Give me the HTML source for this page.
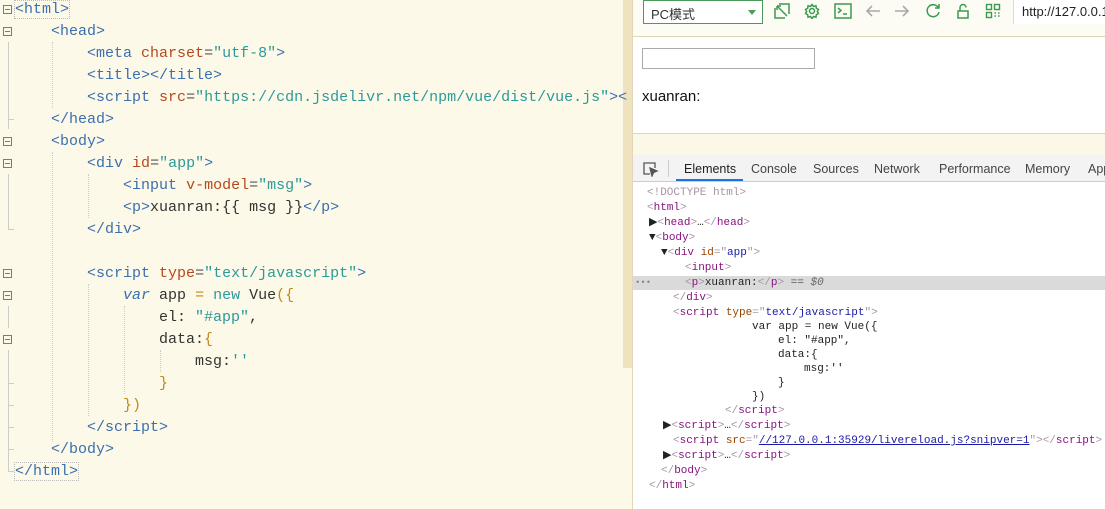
<!DOCTYPE html>
<html><head><meta charset="utf-8"><style>
*{margin:0;padding:0;box-sizing:border-box}
body{width:1105px;height:509px;overflow:hidden;background:#fff;position:relative;font-family:"Liberation Sans","Noto Sans CJK SC",sans-serif}
#ed{position:absolute;left:0;top:0;width:632px;height:509px;background:#fdf9e8}
#sb{position:absolute;left:623px;top:0;width:9px;height:368px;background:#efe2bf}
.ln{position:absolute;left:15px;font:15px/22px "Liberation Mono",monospace;white-space:pre;color:#333}
.t{color:#3a6fb0}.a{color:#b5481d}.v{color:#2b9a9a}.g{color:#555}.o{color:#c08a1a}.k{color:#3a6fb0;font-style:italic}.n{color:#2b9a9a}
.fold{position:absolute;left:3px;width:9px;height:9px;border:1px solid #4a9a5a}
.fold:after{content:"";position:absolute;left:1px;top:3px;width:5px;height:1px;background:#4a9a5a}
.vl{position:absolute;left:8px;width:1px;background:#ccc}
.hk{position:absolute;left:8px;width:6px;height:1px;background:#ccc}
.dg{position:absolute;width:0;border-left:1px dotted #ccc}
#rp{position:absolute;left:632px;top:0;width:473px;height:509px;border-left:1px solid #e0d6b8}
#tb{position:absolute;left:0;top:0;width:473px;height:37px;background:#fdfcf4;border-bottom:1px solid #e0d6b0}
#sel{position:absolute;left:10px;top:0;width:120px;height:24px;border:1px solid #4a9a5a;font-size:13px;padding:3px 7px;color:#333;background:#fff}
#sel:after{content:"";position:absolute;right:6px;top:9px;border:4px solid transparent;border-top:5px solid #4a9a5a}
svg.ic{position:absolute;top:3px;width:16px;height:16px}
#url{position:absolute;left:380px;top:0;width:100px;height:24px;background:#fff;border-left:1px solid #ddd;font-size:13px;padding:4px 8px;color:#222}
#pg{position:absolute;left:0;top:38px;width:473px;height:95px;background:#fff}
#inp{position:absolute;left:9px;top:10px;width:173px;height:21px;border:1px solid #aaa}
#xt{position:absolute;left:9px;top:50px;font-size:15px;color:#111}
#strip{position:absolute;left:0;top:133px;width:473px;height:22px;background:#fcf8e8;border-top:1px solid #e0d6b0}
#tabs{position:absolute;left:0;top:155px;width:473px;height:27px;background:#f3f3f3;border-bottom:1px solid #ccc;font-size:12.5px;color:#444}
#tabs span{position:absolute;top:7px}
#dt{position:absolute;left:0;top:183px;width:473px;height:326px;background:#fff;font:11px/15px "Liberation Mono",monospace;color:#222}
.d{position:absolute;white-space:pre}
.p{color:#881280}.b{color:#a894a6}.an{color:#994500}.av{color:#1a1aa6}
</style></head><body>
<div id="ed">
<div id="sb"></div>
<div class="fold" style="top:5px"></div><div class="fold" style="top:27px"></div><div class="fold" style="top:137px"></div><div class="fold" style="top:159px"></div><div class="fold" style="top:269px"></div><div class="fold" style="top:291px"></div><div class="fold" style="top:335px"></div>
<div class="vl" style="top:42px;height:87px"></div><div class="hk" style="top:119px"></div>
<div class="vl" style="top:174px;height:56px"></div><div class="hk" style="top:229px"></div>
<div class="vl" style="top:306px;height:22px"></div>
<div class="vl" style="top:350px;height:122px"></div><div class="hk" style="top:383px"></div><div class="hk" style="top:405px"></div><div class="hk" style="top:427px"></div><div class="hk" style="top:449px"></div><div class="hk" style="top:471px"></div>
<div class="dg" style="left:52px;top:42px;height:66px"></div>
<div class="dg" style="left:52px;top:152px;height:290px"></div>
<div class="dg" style="left:88px;top:174px;height:44px"></div>
<div class="dg" style="left:88px;top:284px;height:132px"></div>
<div class="dg" style="left:124px;top:306px;height:88px"></div>
<div class="dg" style="left:160px;top:350px;height:22px"></div>
<div class="ln" style="top:-1px"><span class="t" style="outline:1px dotted #bbb">&lt;html&gt;</span></div>
<div class="ln" style="top:21px">    <span class="t">&lt;head&gt;</span></div>
<div class="ln" style="top:43px">        <span class="t">&lt;meta</span> <span class="a">charset</span><span class="g">=</span><span class="v">"utf-8"</span><span class="t">&gt;</span></div>
<div class="ln" style="top:65px">        <span class="t">&lt;title&gt;&lt;/title&gt;</span></div>
<div class="ln" style="top:87px">        <span class="t">&lt;script</span> <span class="a">src</span><span class="g">=</span><span class="v">"https://cdn.jsdelivr.net/npm/vue/dist/vue.js"</span><span class="t">&gt;&lt;</span></div>
<div class="ln" style="top:109px">    <span class="t">&lt;/head&gt;</span></div>
<div class="ln" style="top:131px">    <span class="t">&lt;body&gt;</span></div>
<div class="ln" style="top:153px">        <span class="t">&lt;div</span> <span class="a">id</span><span class="g">=</span><span class="v">"app"</span><span class="t">&gt;</span></div>
<div class="ln" style="top:175px">            <span class="t">&lt;input</span> <span class="a">v-model</span><span class="g">=</span><span class="v">"msg"</span><span class="t">&gt;</span></div>
<div class="ln" style="top:197px">            <span class="t">&lt;p&gt;</span>xuanran:{{ msg }}<span class="t">&lt;/p&gt;</span></div>
<div class="ln" style="top:219px">        <span class="t">&lt;/div&gt;</span></div>
<div class="ln" style="top:263px">        <span class="t">&lt;script</span> <span class="a">type</span><span class="g">=</span><span class="v">"text/javascript"</span><span class="t">&gt;</span></div>
<div class="ln" style="top:285px">            <span class="k">var</span> app <span class="o">=</span> <span class="n">new</span> Vue<span class="o">({</span></div>
<div class="ln" style="top:307px">                el: <span class="v">"#app"</span>,</div>
<div class="ln" style="top:329px">                data:<span class="o">{</span></div>
<div class="ln" style="top:351px">                    msg:<span class="v">''</span></div>
<div class="ln" style="top:373px">                <span class="o">}</span></div>
<div class="ln" style="top:395px">            <span class="o">})</span></div>
<div class="ln" style="top:417px">        <span class="t">&lt;/script&gt;</span></div>
<div class="ln" style="top:439px">    <span class="t">&lt;/body&gt;</span></div>
<div class="ln" style="top:461px"><span class="t" style="outline:1px dotted #bbb">&lt;/html&gt;</span></div>
</div>
<div id="rp">
<div id="tb">
<div id="sel">PC模式</div>
<svg class="ic" style="left:141px" viewBox="0 0 16 16" fill="none" stroke="#3a9a50" stroke-width="1.5"><path d="M1 5V15H11M5 1H15V11M3 3L13 13M3 3H7M3 3V7"/></svg>
<svg class="ic" style="left:171px" viewBox="0 0 16 16" fill="none" stroke="#3a9a50" stroke-width="1.5"><circle cx="8" cy="8" r="2.5"/><path d="M8 1.5L9.5 3.5L12 2.8L12.3 5.3L14.5 6.5L13.3 8.5L14.5 10.5L12.3 11.7L12 14.2L9.5 13.5L8 15.5L6.5 13.5L4 14.2L3.7 11.7L1.5 10.5L2.7 8.5L1.5 6.5L3.7 5.3L4 2.8L6.5 3.5Z"/></svg>
<svg class="ic" style="left:201px;width:18px" viewBox="0 0 18 16" fill="none" stroke="#3a9a50" stroke-width="1.5"><rect x="1" y="1" width="16" height="14"/><path d="M4 5L7 7.5L4 10M9 11H13"/></svg>
<svg class="ic" style="left:232px" viewBox="0 0 16 16" fill="none" stroke="#aaa" stroke-width="1.6"><path d="M15 8H2M7 3L2 8L7 13"/></svg>
<svg class="ic" style="left:261px" viewBox="0 0 16 16" fill="none" stroke="#aaa" stroke-width="1.6"><path d="M1 8H14M9 3L14 8L9 13"/></svg>
<svg class="ic" style="left:292px" viewBox="0 0 16 16" fill="none" stroke="#3a9a50" stroke-width="1.5"><path d="M13.5 5A6 6 0 1 0 14 9M14 1V5H10"/></svg>
<svg class="ic" style="left:322px" viewBox="0 0 16 16" fill="none" stroke="#3a9a50" stroke-width="1.5"><rect x="3" y="8" width="10" height="7"/><path d="M5 8V4.5A3 3 0 0 1 11 4.5"/></svg>
<svg class="ic" style="left:352px" viewBox="0 0 16 16" fill="none" stroke="#3a9a50" stroke-width="1.4"><rect x="1.5" y="1.5" width="5" height="5"/><rect x="9.5" y="1.5" width="5" height="5"/><rect x="1.5" y="9.5" width="5" height="5"/><path d="M9.5 10H11M13 10H14.5M9.5 13H11M13 13H14.5"/></svg>
<div id="url">http://127.0.0.1</div>
</div>
<div id="pg"><div id="inp"></div><div id="xt">xuanran:</div></div>
<div id="strip"></div>
<div id="tabs">
<svg style="position:absolute;left:10px;top:7px" width="16" height="15" viewBox="0 0 16 15" fill="none" stroke="#555" stroke-width="1.3"><path d="M7 12H1V1H12V6"/><path d="M7 6L9 14L10.5 10.5L14 9Z" fill="#555"/></svg>
<div style="position:absolute;left:35px;top:5px;width:1px;height:17px;background:#ccc"></div>
<span style="left:51px;color:#222">Elements</span>
<div style="position:absolute;left:43px;top:24px;width:67px;height:2px;background:#1a73e8"></div>
<span style="left:118px">Console</span><span style="left:180px">Sources</span><span style="left:241px">Network</span><span style="left:306px">Performance</span><span style="left:392px">Memory</span><span style="left:455px">App</span>
</div>
<div id="dt">
<div style="position:absolute;left:0;top:93px;width:473px;height:14px;background:#dadada"></div>
<div class="d" style="left:2px;top:93px;color:#888;font-size:9px">•••</div>
<div class="d b" style="left:14px;top:3px">&lt;!DOCTYPE html&gt;</div>
<div class="d" style="left:14px;top:18px"><span class="b">&lt;</span><span class="p">html</span><span class="b">&gt;</span></div>
<div class="d" style="left:16px;top:33px">▶<span class="b">&lt;</span><span class="p">head</span><span class="b">&gt;</span>…<span class="b">&lt;/</span><span class="p">head</span><span class="b">&gt;</span></div>
<div class="d" style="left:16px;top:48px">▼<span class="b">&lt;</span><span class="p">body</span><span class="b">&gt;</span></div>
<div class="d" style="left:28px;top:63px">▼<span class="b">&lt;</span><span class="p">div</span> <span class="an">id</span><span class="b">="</span><span class="av">app</span><span class="b">"&gt;</span></div>
<div class="d" style="left:52px;top:78px"><span class="b">&lt;</span><span class="p">input</span><span class="b">&gt;</span></div>
<div class="d" style="left:52px;top:93px"><span class="b">&lt;</span><span class="p">p</span><span class="b">&gt;</span>xuanran:<span class="b">&lt;/</span><span class="p">p</span><span class="b">&gt;</span> <span style="color:#555">==</span> <i style="color:#666">$0</i></div>
<div class="d" style="left:40px;top:108px"><span class="b">&lt;/</span><span class="p">div</span><span class="b">&gt;</span></div>
<div class="d" style="left:40px;top:123px"><span class="b">&lt;</span><span class="p">script</span> <span class="an">type</span><span class="b">="</span><span class="av">text/javascript</span><span class="b">"&gt;</span></div>
<div class="d" style="left:119px;top:137px">var app = new Vue({</div>
<div class="d" style="left:145px;top:151px">el: "#app",</div>
<div class="d" style="left:145px;top:165px">data:{</div>
<div class="d" style="left:171px;top:179px">msg:''</div>
<div class="d" style="left:145px;top:193px">}</div>
<div class="d" style="left:119px;top:207px">})</div>
<div class="d" style="left:92px;top:221px"><span class="b">&lt;/</span><span class="p">script</span><span class="b">&gt;</span></div>
<div class="d" style="left:30px;top:236px">▶<span class="b">&lt;</span><span class="p">script</span><span class="b">&gt;</span>…<span class="b">&lt;/</span><span class="p">script</span><span class="b">&gt;</span></div>
<div class="d" style="left:40px;top:251px"><span class="b">&lt;</span><span class="p">script</span> <span class="an">src</span><span class="b">="</span><span class="av" style="text-decoration:underline">//127.0.0.1:35929/livereload.js?snipver=1</span><span class="b">"&gt;&lt;/</span><span class="p">script</span><span class="b">&gt;</span></div>
<div class="d" style="left:30px;top:266px">▶<span class="b">&lt;</span><span class="p">script</span><span class="b">&gt;</span>…<span class="b">&lt;/</span><span class="p">script</span><span class="b">&gt;</span></div>
<div class="d" style="left:28px;top:281px"><span class="b">&lt;/</span><span class="p">body</span><span class="b">&gt;</span></div>
<div class="d" style="left:16px;top:296px"><span class="b">&lt;/</span><span class="p">html</span><span class="b">&gt;</span></div>
</div>
</div>
</body></html>
